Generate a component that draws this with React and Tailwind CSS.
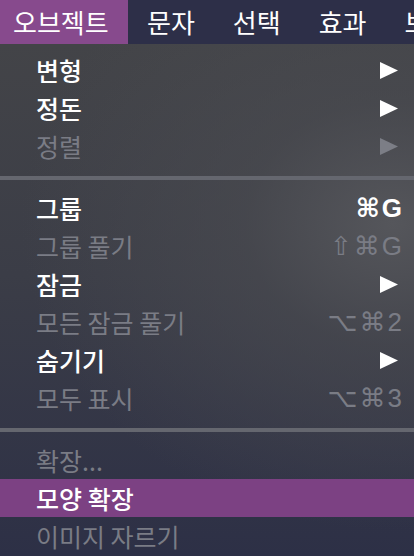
import React from 'react';

const FONT = { fontFamily: '"Noto Sans CJK KR", "Noto Sans", sans-serif' };
const KEYS = { fontFamily: '"Liberation Sans", "DejaVu Sans", sans-serif' };

const menuBar = ['문자', '선택', '효과', '보기'];

const sections = [
  [
    { label: '변형', sub: true },
    { label: '정돈', sub: true },
    { label: '정렬', sub: true, disabled: true },
  ],
  [
    { label: '그룹', keys: '⌘G' },
    { label: '그룹 풀기', keys: '⇧⌘G', disabled: true },
    { label: '잠금', sub: true },
    { label: '모든 잠금 풀기', keys: '⌥⌘2', disabled: true },
    { label: '숨기기', sub: true },
    { label: '모두 표시', keys: '⌥⌘3', disabled: true },
  ],
  [
    { label: '확장...', disabled: true },
    { label: '모양 확장', active: true },
    { label: '이미지 자르기', disabled: true },
  ],
];

// 서브메뉴 화살표
const Arrow = ({ dim }) => (
  <svg width="18" height="17" viewBox="0 0 18 17" className="mr-[6px]">
    <polygon points="0,0 18,8.5 0,17" fill={dim ? '#7c7e86' : '#ffffff'} />
  </svg>
);

const MenuItem = ({ item }) => (
  <div
    className={`flex h-[38px] items-center justify-between pl-[36px] pr-[10px] ${
      item.active ? 'bg-[#7c4183]' : ''
    }`}
  >
    <span
      className={`text-[25px] leading-none ${
        item.disabled ? 'text-[#7a7c85] font-normal' : 'text-white font-medium'
      }`}
    >
      {item.label}
    </span>
    {item.sub && <Arrow dim={item.disabled} />}
    {item.keys && (
      <span
        style={KEYS}
        className={`text-[26px] leading-none tracking-[2px] ${
          item.disabled ? 'text-[#7a7c85]' : 'text-white font-bold'
        }`}
      >
        {item.keys}
      </span>
    )}
  </div>
);

export default function App() {
  return (
    <div style={FONT} className="w-[414px] h-[556px] overflow-hidden bg-[#2e3147] select-none">
      <div className="flex h-[44px] items-center overflow-hidden bg-[#2d2f48] text-white text-[26px] whitespace-nowrap">
        <div className="flex h-full w-[128px] shrink-0 items-center bg-[#874a8d] pl-[13px]">
          <span className="leading-none">오브젝트</span>
        </div>
        <div className="ml-[19px] flex shrink-0 gap-[38px]">
          {menuBar.map((m) => (
            <span key={m} className="leading-none">{m}</span>
          ))}
        </div>
      </div>

      <div className="h-[512px] pt-[7px] bg-[radial-gradient(ellipse_90%_60%_at_95%_35%,#55565b_0%,rgba(75,76,81,0.6)_40%,rgba(60,62,70,0)_100%),linear-gradient(180deg,#434448_0%,#3b3d47_45%,#2d3046_100%)]">
        {sections.map((sec, i) => (
          <div key={i}>
            {i > 0 && (
              <div className="pt-[11px] pb-[9px]">
                <div className="h-[4px] bg-[#65676f]" />
              </div>
            )}
            {sec.map((item) => (
              <MenuItem key={item.label} item={item} />
            ))}
          </div>
        ))}
      </div>
    </div>
  );
}
